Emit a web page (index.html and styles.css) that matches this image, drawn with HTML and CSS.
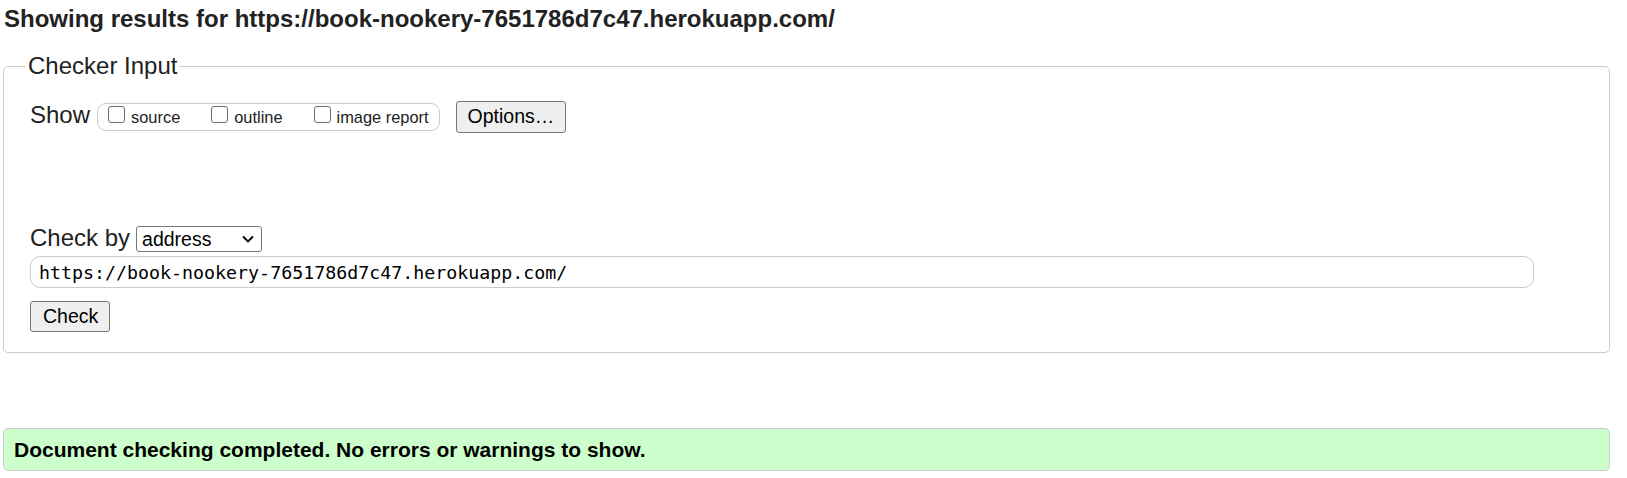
FILE: index.html
```html
<!DOCTYPE html>
<html lang="en">
<head>
<meta charset="utf-8">
<title>Showing results for https://book-nookery-7651786d7c47.herokuapp.com/</title>
<link rel="stylesheet" href="styles.css">
</head>
<body>
<h2 class="page-title">Showing results for https://book-nookery-7651786d7c47.herokuapp.com/</h2>
<form class="checker">
  <fieldset class="checker-input">
    <legend class="checker-legend">Checker Input</legend>
    <div class="checker-body">
      <div class="show-row">
        <span class="row-label show-label">Show</span>
        <span class="show-group">
          <label class="opt"><input type="checkbox" class="cb"><span class="opt-text">source</span></label>
          <label class="opt"><input type="checkbox" class="cb"><span class="opt-text">outline</span></label>
          <label class="opt"><input type="checkbox" class="cb"><span class="opt-text">image report</span></label>
        </span>
        <button type="button" class="btn btn-options">Options…</button>
      </div>
      <div class="checkby-row">
        <span class="row-label checkby-label">Check by</span>
        <span class="select-wrap">
          <select class="checkby-select">
            <option>address</option>
            <option>file upload</option>
            <option>text input</option>
          </select>
          <svg class="select-chevron" width="12" height="8" viewBox="0 0 12 8" aria-hidden="true"><path d="M1 1.5 L6 6.5 L11 1.5" fill="none" stroke="#000" stroke-width="1.9"/></svg>
        </span>
      </div>
      <input class="url-input" type="url" value="https://book-nookery-7651786d7c47.herokuapp.com/">
      <button type="button" class="btn btn-check">Check</button>
    </div>
  </fieldset>
</form>
<div class="success">
  <p class="success-text">Document checking completed. No errors or warnings to show.</p>
</div>
</body>
</html>
```
FILE: styles.css
```css
html, body {
  margin: 0;
  padding: 0;
  background: #fff;
}

body {
  font-family: "Liberation Sans", Arial, sans-serif;
  color: #222;
}

.page-title {
  margin: 0;
  padding: 5px 0 0 4px;
  font-size: 24px;
  line-height: 28px;
  font-weight: bold;
  color: #222;
}

.checker {
  margin: 0;
}

.checker-input {
  margin: 19px 17px 0 3px;
  border: 1px solid #ccc;
  border-radius: 5px;
  padding: 21px 0 20px 21px;
  min-width: 0;
}

.checker-legend {
  margin-left: 1px;
  padding: 0 2px;
  font-size: 24px;
  line-height: 28px;
  color: #222;
}

.checker-body {
  padding-left: 5px;
}

.show-row {
  display: flex;
  align-items: center;
  height: 32px;
}

.row-label {
  font-size: 24px;
  line-height: 28px;
  color: #222;
}

.show-label {
  margin-bottom: 5px;
}

.show-group {
  display: flex;
  align-items: center;
  height: 28px;
  box-sizing: border-box;
  margin-left: 7px;
  padding: 0 10px 0 10px;
  border: 1px solid #ccc;
  border-radius: 9px;
}

.opt {
  display: flex;
  align-items: center;
  font-size: 16.4px;
  line-height: 19px;
  color: #222;
}

.opt + .opt {
  margin-left: 31px;
}

.cb {
  appearance: none;
  -webkit-appearance: none;
  width: 17px;
  height: 17px;
  margin: 0 6px 6px 0;
  box-sizing: border-box;
  border: 1px solid #6b6b6b;
  border-radius: 3px;
  background: #fff;
}

.btn {
  font-family: "Liberation Sans", Arial, sans-serif;
  font-size: 19.5px;
  color: #000;
  background: #efefef;
  border: 1px solid #767676;
  border-radius: 3px;
  box-sizing: border-box;
  line-height: 1;
}

.btn-options {
  margin-left: 16px;
  height: 32px;
  padding: 0 11px;
}

.checkby-row {
  display: flex;
  align-items: center;
  height: 26px;
  margin-top: 93px;
}

.checkby-label {
  line-height: 26px;
  margin-bottom: 2px;
}

.select-wrap {
  position: relative;
  display: inline-flex;
  margin-left: 6px;
}

.checkby-select {
  appearance: none;
  -webkit-appearance: none;
  width: 126px;
  height: 26px;
  box-sizing: border-box;
  font-family: "Liberation Sans", Arial, sans-serif;
  font-size: 19.5px;
  color: #000;
  background-color: #fff;
  border: 1px solid #767676;
  border-radius: 3px;
  padding: 0 0 0 5px;
  margin: 0;
}

.select-chevron {
  position: absolute;
  right: 8px;
  top: 9px;
  pointer-events: none;
}

.url-input {
  display: block;
  margin: 4px 0 0 0;
  width: 1504px;
  height: 32px;
  box-sizing: border-box;
  border: 1px solid #ccc;
  border-radius: 10px;
  padding: 0 8px;
  font-family: "DejaVu Sans Mono", "Liberation Mono", monospace;
  font-size: 18.3px;
  color: #000;
  background: #fff;
}

.btn-check {
  display: block;
  margin-top: 13px;
  width: 80px;
  height: 31px;
  padding: 0 12px;
}

.success {
  margin: 75px 17px 0 3px;
  border: 1px solid #ccc;
  border-radius: 5px;
  background: #ccffcc;
  padding: 0 10px;
}

.success-text {
  margin: 0;
  font-size: 21px;
  line-height: 41px;
  font-weight: bold;
  color: #000;
}
```
